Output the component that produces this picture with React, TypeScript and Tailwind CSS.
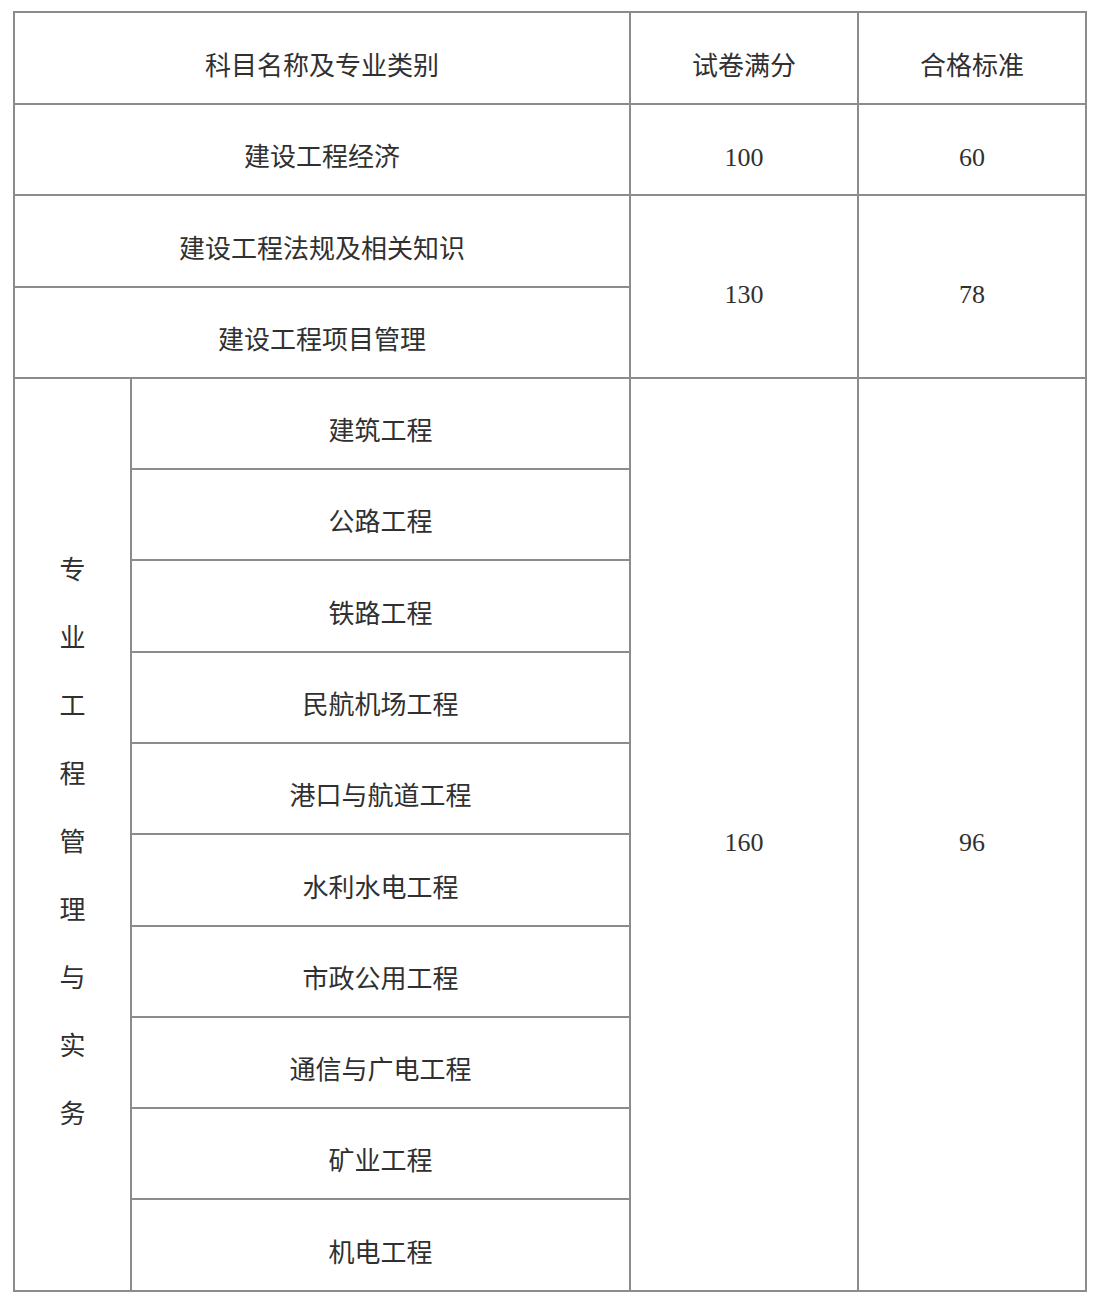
import React from "react";

const subjects = [
  "建筑工程",
  "公路工程",
  "铁路工程",
  "民航机场工程",
  "港口与航道工程",
  "水利水电工程",
  "市政公用工程",
  "通信与广电工程",
  "矿业工程",
  "机电工程",
];

const rowH = ["h-[91px]", "h-[91px]", "h-[92px]", "h-[91px]", "h-[91px]", "h-[92px]", "h-[91px]", "h-[91px]", "h-[91px]", "h-[92px]"];

const cell = "border-2 border-[#8c8c8c] text-center align-middle pt-[16px]";

const App = () => {
  return (
    <div className="w-[1100px] h-[1308px] bg-white pt-[11px] pl-[13px]">
      <table
        className="border-collapse w-[1072px] text-[26px] text-[#303030] table-fixed"
        style={{ fontFamily: '"Liberation Serif", "Noto Sans CJK SC", serif' }}
      >
        <colgroup>
          <col className="w-[117px]" />
          <col className="w-[499px]" />
          <col className="w-[228px]" />
          <col className="w-[228px]" />
        </colgroup>
        <tbody>
          <tr className="h-[92px]">
            <td colSpan={2} className={cell}>科目名称及专业类别</td>
            <td className={cell}>试卷满分</td>
            <td className={cell}>合格标准</td>
          </tr>
          <tr className="h-[91px]">
            <td colSpan={2} className={cell}>建设工程经济</td>
            <td className={cell}>100</td>
            <td className={cell}>60</td>
          </tr>
          <tr className="h-[92px]">
            <td colSpan={2} className={cell}>建设工程法规及相关知识</td>
            <td rowSpan={2} className={cell}>130</td>
            <td rowSpan={2} className={cell}>78</td>
          </tr>
          <tr className="h-[91px]">
            <td colSpan={2} className={cell}>建设工程项目管理</td>
          </tr>
          {subjects.map((s, i) => (
            <tr key={s} className={rowH[i]}>
              {i === 0 && (
                <td rowSpan={10} className={cell}>
                  <div className="flex flex-col items-center">
                    {"专业工程管理与实务".split("").map((c, j) => (
                      <span key={j} className="leading-[68px]">{c}</span>
                    ))}
                  </div>
                </td>
              )}
              <td className={cell}>{s}</td>
              {i === 0 && (
                <>
                  <td rowSpan={10} className={cell}>160</td>
                  <td rowSpan={10} className={cell}>96</td>
                </>
              )}
            </tr>
          ))}
        </tbody>
      </table>
    </div>
  );
};

export default App;
